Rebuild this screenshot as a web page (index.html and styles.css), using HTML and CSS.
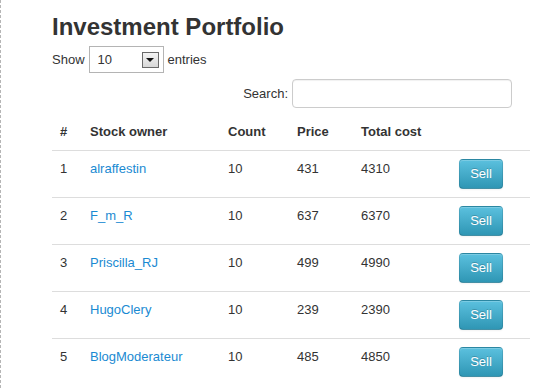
FILE: index.html
```html
<!DOCTYPE html>
<html lang="en">
<head>
    <meta charset="UTF-8">
    <title>Investment Portfolio</title>
    <link rel="stylesheet" href="styles.css">
</head>
<body>
    <div class="page">
        <h2 class="title">Investment Portfolio</h2>
        <div class="length">
            <span>Show</span>
            <div class="select">
                <span class="value">10</span>
                <span class="drop"><span class="tri"></span></span>
            </div>
            <span>entries</span>
        </div>
        <div class="filter">
            <label>Search:</label>
            <div class="search"></div>
        </div>
        <table class="stocks">
            <thead>
                <tr>
                    <th class="c-num">#</th>
                    <th class="c-owner">Stock owner</th>
                    <th class="c-count">Count</th>
                    <th class="c-price">Price</th>
                    <th class="c-total">Total cost</th>
                    <th class="c-act"></th>
                </tr>
            </thead>
            <tbody>
                <tr>
                    <td>1</td><td><a href="#">alraffestin</a></td><td>10</td><td>431</td><td>4310</td>
                    <td><button class="btn">Sell</button></td>
                </tr>
                <tr>
                    <td>2</td><td><a href="#">F_m_R</a></td><td>10</td><td>637</td><td>6370</td>
                    <td><button class="btn">Sell</button></td>
                </tr>
                <tr>
                    <td>3</td><td><a href="#">Priscilla_RJ</a></td><td>10</td><td>499</td><td>4990</td>
                    <td><button class="btn">Sell</button></td>
                </tr>
                <tr>
                    <td>4</td><td><a href="#">HugoClery</a></td><td>10</td><td>239</td><td>2390</td>
                    <td><button class="btn">Sell</button></td>
                </tr>
                <tr>
                    <td>5</td><td><a href="#">BlogModerateur</a></td><td>10</td><td>485</td><td>4850</td>
                    <td><button class="btn">Sell</button></td>
                </tr>
            </tbody>
        </table>
    </div>
</body>
</html>
```

FILE: styles.css
```css
* {
    margin: 0;
    padding: 0;
    box-sizing: border-box;
}
body {
    font-family: "Liberation Sans", Arial, sans-serif;
    font-size: 13px;
    line-height: 20px;
    color: #333;
    background: #fff;
}
.page {
    min-height: 100vh;
    border-left: 1px dashed #b5b5b5;
    padding: 13px 0 0 51px;
}
.title {
    font-size: 24px;
    line-height: 28px;
    font-weight: bold;
}
.length {
    margin-top: 5px;
    display: flex;
    align-items: center;
    gap: 4px;
    height: 27px;
}
.select {
    width: 75px;
    height: 27px;
    border: 1px solid #b4b4b4;
    display: flex;
    align-items: center;
    justify-content: space-between;
    padding: 0 4px 0 8px;
}
.drop {
    width: 17px;
    height: 16px;
    border: 1px solid #6a6a6a;
    background: linear-gradient(#f4f4f4, #d8d8d8);
    display: flex;
    align-items: center;
    justify-content: center;
}
.tri {
    width: 0;
    height: 0;
    border-left: 4px solid transparent;
    border-right: 4px solid transparent;
    border-top: 4px solid #111;
}
.filter {
    margin-top: 6px;
    width: 460px;
    display: flex;
    justify-content: flex-end;
    align-items: center;
    gap: 4px;
}
.search {
    width: 220px;
    height: 29px;
    border: 1px solid #ccc;
    border-radius: 4px;
    box-shadow: inset 0 1px 1px rgba(0,0,0,0.06);
}
.stocks {
    margin-top: 6px;
    width: 478px;
    border-collapse: collapse;
    table-layout: fixed;
}
.stocks th,
.stocks td {
    text-align: left;
    padding: 8px;
    vertical-align: top;
}
.stocks th {
    font-weight: bold;
}
.stocks td {
    border-top: 1px solid #ddd;
}
.c-num { width: 30px; }
.c-owner { width: 138px; }
.c-count { width: 69px; }
.c-price { width: 64px; }
.c-total { width: 98px; }
.c-act { width: 79px; }
.stocks a {
    color: #1a8ad2;
    text-decoration: none;
}
.btn {
    font-family: inherit;
    font-size: 13px;
    line-height: 20px;
    width: 44px;
    height: 30px;
    padding: 4px 0;
    color: #fff;
    text-shadow: 0 -1px 0 rgba(0,0,0,0.2);
    background: linear-gradient(#5bc0de, #2f96b4);
    border: 1px solid #2a8bab;
    border-color: rgba(0,0,0,0.1) rgba(0,0,0,0.1) rgba(0,0,0,0.25);
    border-radius: 4px;
    box-shadow: inset 0 1px 0 rgba(255,255,255,0.2), 0 1px 2px rgba(0,0,0,0.05);
    cursor: pointer;
}
```
